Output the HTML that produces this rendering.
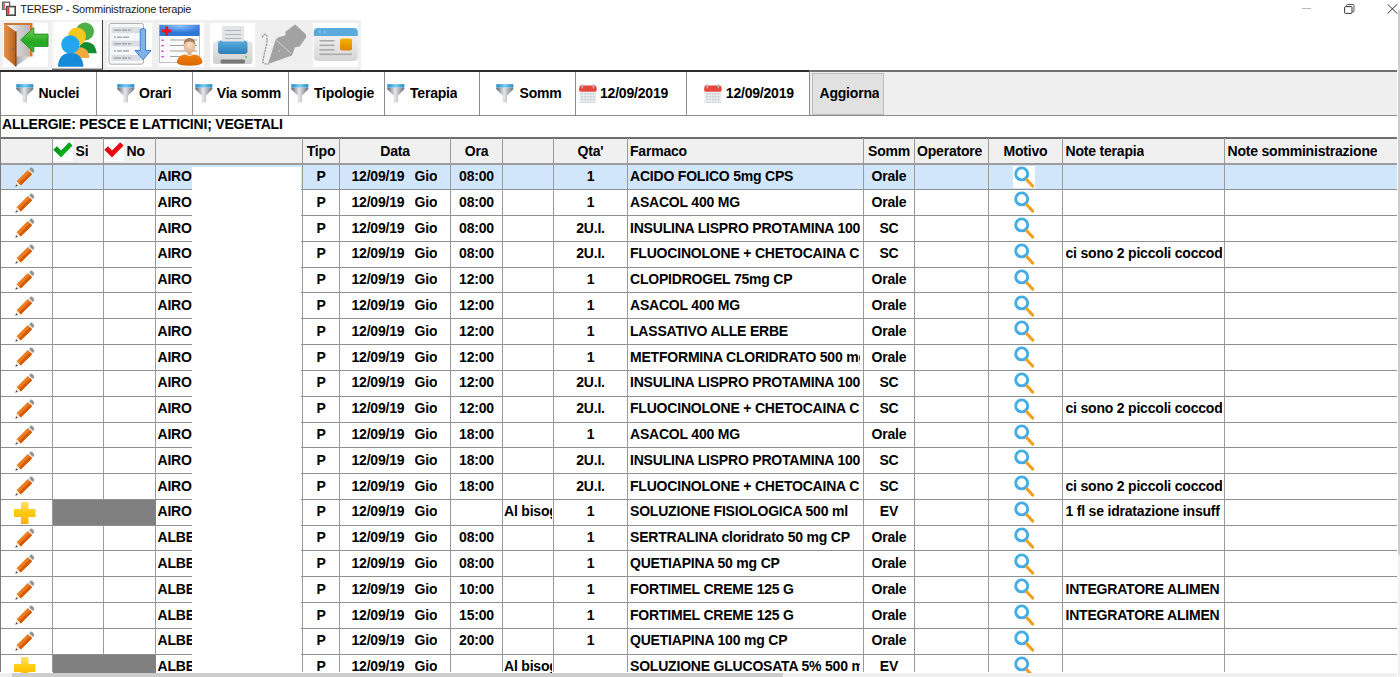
<!DOCTYPE html><html><head><meta charset="utf-8"><style>
html,body{margin:0;padding:0;width:1400px;height:677px;overflow:hidden;background:#fff;position:relative;font-family:'Liberation Sans',sans-serif;color:#000}
.t{position:absolute;white-space:nowrap;line-height:16px;height:17px;overflow:hidden;letter-spacing:-0.2px}
svg{display:block}
</style></head><body>
<svg style="position:absolute;left:0px;top:0px" width="18" height="18" viewBox="0 0 18 18"><rect x="2.6" y="2.2" width="7" height="7" fill="#fff" stroke="#666" stroke-width="1.4"/><rect x="3.3" y="3" width="1.6" height="5.5" fill="#e84848"/><rect x="6.8" y="6.6" width="8.4" height="8.6" fill="#fff" stroke="#4a4a4a" stroke-width="1.6"/><rect x="7.6" y="7.4" width="1.8" height="7" fill="#e83030"/></svg>
<div class="t" style="left:20.2px;top:0.6px;font-size:11px;font-weight:normal;color:#1a1a1a;letter-spacing:-0.2px">TERESP - Somministrazione terapie</div>
<div style="position:absolute;left:1302px;top:8px;width:9px;height:1px;background:#b8b8b8"></div>
<svg style="position:absolute;left:1343px;top:3px" width="14" height="12" viewBox="0 0 14 12"><path d="M3.5 3 L3.5 2.5 Q3.5 1.5 4.5 1.5 L10 1.5 Q11 1.5 11 2.5 L11 8 Q11 9 10 9 L9.5 9" fill="none" stroke="#555" stroke-width="1"/><rect x="1.6" y="3.6" width="7.4" height="6.8" fill="#fff" stroke="#333" stroke-width="1" rx="0.8"/></svg>
<svg style="position:absolute;left:1387px;top:4px" width="11" height="10" viewBox="0 0 11 10"><path d="M0.5 0.2 L10.3 9.6 M10.3 0.2 L0.5 9.6" stroke="#333" stroke-width="1"/></svg>
<div style="position:absolute;left:1397.5px;top:10px;width:2.5px;height:545px;background:#cdcdcd"></div>
<div style="position:absolute;left:1397.5px;top:555px;width:2.5px;height:122px;background:#f0f0f0"></div>
<div style="position:absolute;left:0px;top:20px;width:361px;height:50px;background:#efefef"></div>
<div style="position:absolute;left:3px;top:23px;width:45px;height:44px;background:#fff"></div>
<div style="position:absolute;left:107px;top:23px;width:45px;height:44px;background:#fff"></div>
<div style="position:absolute;left:158.5px;top:23px;width:45px;height:44px;background:#fff"></div>
<div style="position:absolute;left:209.8px;top:23px;width:45px;height:44px;background:#fff"></div>
<div style="position:absolute;left:313px;top:23px;width:45px;height:44px;background:#fff"></div>
<div style="position:absolute;left:52px;top:21px;width:50px;height:49px;background:#f7f7f7"></div>
<div style="position:absolute;left:55px;top:23px;width:45px;height:44px;background:#fff"></div>
<div style="position:absolute;left:102px;top:20px;width:1px;height:50px;background:#3c3c3c"></div>
<div style="position:absolute;left:52px;top:68px;width:50px;height:1px;background:#bdbdbd"></div>
<div style="position:absolute;left:52px;top:69px;width:51px;height:1px;background:#6a6a6a"></div>
<svg style="position:absolute;left:3px;top:22px" width="46" height="46" viewBox="0 0 46 46">
<defs><linearGradient id="dg" x1="0" y1="0" x2="1" y2="0"><stop offset="0" stop-color="#fafafa"/><stop offset="0.5" stop-color="#d0d0d0"/><stop offset="1" stop-color="#b8b8b8"/></linearGradient>
<linearGradient id="wd" x1="0" y1="0" x2="1" y2="0"><stop offset="0" stop-color="#e39148"/><stop offset="1" stop-color="#b9621e"/></linearGradient>
<linearGradient id="fl" x1="0" y1="0" x2="1" y2="0"><stop offset="0" stop-color="#a0a0a0"/><stop offset="1" stop-color="#f4f4f4"/></linearGradient>
<linearGradient id="ag" x1="0" y1="0" x2="0" y2="1"><stop offset="0" stop-color="#74d254"/><stop offset="0.6" stop-color="#22a822"/><stop offset="1" stop-color="#3bb53b"/></linearGradient></defs>
<rect x="1" y="1" width="28.5" height="33.5" fill="#cf7a32"/>
<rect x="3.5" y="3" width="23.5" height="31.5" fill="url(#dg)"/>
<path d="M12.5 34.5 L28 34.5 L12.5 44 Z" fill="url(#fl)"/>
<path d="M1 1 L12.5 9.5 L12.5 44.5 L1 34.5 Z" fill="url(#wd)"/>
<rect x="12" y="9.5" width="1.6" height="35" fill="#8a4814"/>
<circle cx="10" cy="27" r="0.9" fill="#666"/><rect x="1.5" y="10" width="1.3" height="2" fill="#999"/><rect x="1.5" y="28" width="1.3" height="2" fill="#999"/>
<path d="M17.7 17.9 L30.8 5.6 L30.8 12.1 L45 12.1 L45 24.4 L30.8 24.4 L30.8 30.2 Z" fill="url(#ag)" stroke="#1c8c1c" stroke-width="0.9" stroke-linejoin="round"/>
</svg>
<svg style="position:absolute;left:55px;top:22px" width="46" height="46" viewBox="0 0 46 46">
<path d="M24 25 Q27 20 31 20 Q40.5 20 41.8 31.3 L28 31.3 Z" fill="#128a2e"/><circle cx="30" cy="9.4" r="9" fill="#4cb048"/>
<path d="M17 36 Q18 26 24 25 Q33.5 25 34.6 36 Z" fill="#f2aa3c"/><circle cx="21.9" cy="14.4" r="9" fill="#f8c81e"/>
<circle cx="15.4" cy="22.5" r="9.2" fill="#22a6ee"/><path d="M3 44.8 Q3.5 31 15.5 31 Q27.8 31 28.4 44.8 Z" fill="#168ad8"/>
</svg>
<svg style="position:absolute;left:107px;top:23px" width="45" height="44" viewBox="0 0 45 44">
<rect x="2" y="0.4" width="34.5" height="40.8" rx="2" fill="#f6f7f8" stroke="#a9adb2" stroke-width="1"/>
<g fill="#d9dee3"><rect x="4.5" y="4" width="29" height="6.2"/><rect x="4.5" y="17.7" width="29" height="5.8"/><rect x="4.5" y="31.9" width="29" height="5.9"/></g>
<g fill="#9aa0a6"><rect x="7" y="6.5" width="7" height="1.3"/><rect x="15" y="6.5" width="5" height="1.3"/><rect x="21" y="6.5" width="3" height="1.3"/>
<rect x="7" y="13.6" width="2" height="1.3"/><rect x="10" y="13.6" width="5" height="1.3"/><rect x="16" y="13.6" width="6" height="1.3"/>
<rect x="7" y="20.2" width="7" height="1.3"/><rect x="15" y="20.2" width="5" height="1.3"/><rect x="21" y="20.2" width="3" height="1.3"/>
<rect x="7" y="27.3" width="2" height="1.3"/><rect x="10" y="27.3" width="5" height="1.3"/><rect x="16" y="27.3" width="6" height="1.3"/>
<rect x="7" y="34.4" width="7" height="1.3"/><rect x="15" y="34.4" width="5" height="1.3"/><rect x="21" y="34.4" width="3" height="1.3"/></g>
<path d="M33.3 6.5 Q36 4.3 38.6 6.5 L38.6 27.5 L44 27.5 L36 36.8 L28 27.5 L33.3 27.5 Z" fill="#80b2ea" stroke="#3f7fcc" stroke-width="1" stroke-linejoin="round"/>
</svg>
<svg style="position:absolute;left:158px;top:23px" width="46" height="44" viewBox="0 0 46 44">
<defs><radialGradient id="hg" cx="0.5" cy="0.1" r="0.6"><stop offset="0" stop-color="#8cc0ff"/><stop offset="1" stop-color="#2f78d6"/></radialGradient>
<radialGradient id="fg2" cx="0.5" cy="0.4" r="0.6"><stop offset="0" stop-color="#fbe3cc"/><stop offset="1" stop-color="#dcae88"/></radialGradient>
<linearGradient id="bg2" x1="0" y1="0" x2="0" y2="1"><stop offset="0" stop-color="#f08010"/><stop offset="1" stop-color="#d86800"/></linearGradient></defs>
<rect x="1.5" y="2" width="40" height="37.5" fill="#fafafa" stroke="#c4c4c4" stroke-width="1"/>
<rect x="1.5" y="2" width="40" height="11" fill="url(#hg)"/>
<path d="M7.1 3.5 h3 v3 h3 v3 h-3 v3 h-3 v-3 h-3 v-3 h3 z" fill="#f0101a"/>
<g fill="#d830d8"><rect x="3.5" y="16.5" width="2.2" height="1.4"/><rect x="3.5" y="22" width="2.2" height="1.4"/><rect x="3.5" y="27.5" width="2.2" height="1.4"/><rect x="3.5" y="33" width="2.2" height="1.4"/></g>
<g fill="#a0a0a0"><rect x="12" y="16.5" width="27" height="1"/><rect x="12" y="22" width="27" height="1"/><rect x="12" y="27.5" width="27" height="1"/><rect x="12" y="33" width="27" height="1"/></g>
<rect x="29.5" y="27" width="4" height="5" fill="#d8b090"/>
<ellipse cx="31.5" cy="23" rx="5.8" ry="7" fill="url(#fg2)"/>
<path d="M25.6 22.5 Q25.3 15 31.5 15 Q37.7 15 37.4 22.5 Q36.2 18.5 31.5 18.5 Q26.8 18.5 25.6 22.5Z" fill="#a08060"/>
<path d="M18.8 39 Q19.5 32.5 27 31.5 L31.5 33 L36 31.5 Q44 32.5 44.5 39 Q44 42.8 31.5 42.8 Q19 42.8 18.8 39 Z" fill="url(#bg2)"/>
</svg>
<svg style="position:absolute;left:210px;top:23px" width="45" height="44" viewBox="0 0 45 44">
<defs><linearGradient id="pb" x1="0" y1="0" x2="0" y2="1"><stop offset="0" stop-color="#5aaee0"/><stop offset="1" stop-color="#2a7fb8"/></linearGradient>
<linearGradient id="pgray" x1="0" y1="0" x2="0" y2="1"><stop offset="0" stop-color="#e8e8e8"/><stop offset="1" stop-color="#cfcfcf"/></linearGradient></defs>
<rect x="3" y="18.5" width="39.5" height="22.5" rx="3" fill="url(#pgray)"/>
<rect x="8" y="17.5" width="29.5" height="13.5" rx="3" fill="url(#pb)"/>
<rect x="12" y="3" width="22" height="15.5" fill="#e4e4e4"/>
<g fill="#a8b4bf"><rect x="15" y="7" width="16" height="1"/><rect x="15" y="11" width="16" height="1"/><rect x="15" y="15" width="16" height="1"/></g>
<rect x="10.5" y="36.5" width="24.5" height="4" rx="1.5" fill="#777"/>
<circle cx="36" cy="34" r="0.9" fill="#3c3"/>
</svg>
<svg style="position:absolute;left:255px;top:18px" width="56" height="52" viewBox="0 0 56 52">
<path d="M13 46 L20.7 21.5 L23 19.6 L30.7 17.3 L30.3 13.8 L40.3 6.5 L51 16.5 L51 19.6 L44.5 28.4 L40 29.2 L36.9 37.6 Z" fill="#a2a2a2"/>
<path d="M21.5 22.5 L36 35.5" stroke="#dadada" stroke-width="0.9"/>
<circle cx="24.2" cy="33" r="0.8" fill="#d8d8d8"/>
<path d="M7.3 19.6 Q8.5 15.2 11.2 16.6 Q12.8 18.5 11.5 27 Q8.8 37 7.8 44 Q8.5 46.5 13.5 46" fill="none" stroke="#9c9c9c" stroke-width="1.4" stroke-dasharray="2.2 0.8"/>
</svg>
<svg style="position:absolute;left:313px;top:23px" width="46" height="44" viewBox="0 0 46 44">
<defs><linearGradient id="cg" x1="0" y1="0" x2="0" y2="1"><stop offset="0" stop-color="#f8f8f8"/><stop offset="1" stop-color="#d6d6d6"/></linearGradient>
<linearGradient id="og" x1="0" y1="0" x2="0" y2="1"><stop offset="0" stop-color="#f5b300"/><stop offset="1" stop-color="#e08400"/></linearGradient></defs>
<rect x="0.8" y="5" width="44" height="33" rx="4" fill="url(#cg)"/>
<path d="M0.8 9 Q0.8 5 4.8 5 L40.8 5 Q44.8 5 44.8 9 L44.8 13 L0.8 13 Z" fill="#5aabdb"/>
<g fill="#9fcbe8"><path d="M5.5 9 L7.5 7.5 L7.5 10.5Z"/><path d="M11 7.5 L13 9 L11 10.5Z"/></g>
<g fill="#aaa"><rect x="6.5" y="17" width="15" height="1.6"/><rect x="6.5" y="21.5" width="15" height="1.6"/><rect x="6.5" y="26" width="15" height="1.6"/><rect x="6.5" y="30.5" width="32.5" height="1.6"/></g>
<rect x="27" y="15.5" width="12" height="12" rx="2" fill="url(#og)"/>
</svg>
<div style="position:absolute;left:0px;top:70px;width:809px;height:2px;background:#2e2e2e"></div>
<div style="position:absolute;left:809px;top:70px;width:588px;height:2px;background:#707070"></div>
<div style="position:absolute;left:0px;top:72px;width:1397px;height:43px;background:#efefef"></div>
<div style="position:absolute;left:0px;top:72px;width:810px;height:43px;background:#fff"></div>
<div style="position:absolute;left:0px;top:114.5px;width:1397px;height:1px;background:#8c8c8c"></div>
<div style="position:absolute;left:0px;top:72px;width:1px;height:43px;background:#8c8c8c"></div>
<div style="position:absolute;left:96px;top:72px;width:1px;height:43px;background:#8c8c8c"></div>
<div style="position:absolute;left:192px;top:72px;width:1px;height:43px;background:#8c8c8c"></div>
<div style="position:absolute;left:288px;top:72px;width:1px;height:43px;background:#8c8c8c"></div>
<div style="position:absolute;left:384px;top:72px;width:1px;height:43px;background:#8c8c8c"></div>
<div style="position:absolute;left:479px;top:72px;width:1px;height:43px;background:#8c8c8c"></div>
<div style="position:absolute;left:575px;top:72px;width:1px;height:43px;background:#8c8c8c"></div>
<div style="position:absolute;left:686px;top:72px;width:1px;height:43px;background:#8c8c8c"></div>
<div style="position:absolute;left:809px;top:72px;width:1px;height:43px;background:#8c8c8c"></div>
<div style="position:absolute;left:812px;top:73px;width:72px;height:41.5px;box-sizing:border-box;background:#e1e1e1;border:1px solid #bcbcbc"></div>
<div class="t" style="left:819.5px;top:84.8px;font-size:14px;font-weight:bold;">Aggiorna</div>
<div style="position:absolute;left:16.1px;top:84px"><svg width="18" height="19" viewBox="0 0 18 19"><defs><linearGradient id="fg" x1="0" y1="0" x2="1" y2="0"><stop offset="0" stop-color="#5f6468"/><stop offset="0.45" stop-color="#e6e8ea"/><stop offset="1" stop-color="#6f7478"/></linearGradient><linearGradient id="fb" x1="0" y1="0" x2="1" y2="0"><stop offset="0" stop-color="#2b88c8"/><stop offset="0.5" stop-color="#78cdf0"/><stop offset="1" stop-color="#2b88c8"/></linearGradient></defs><path d="M0.3 3.4 L17.3 3.4 L17.3 5.2 L11 11.8 L11 17.6 Q10.6 18.6 9.2 18.6 L6.8 18.6 L6.8 11.8 L0.3 5.2 Z" fill="url(#fg)"/><rect x="0.3" y="0.1" width="17" height="3.4" fill="url(#fb)"/></svg></div>
<div class="t" style="left:38.4px;top:84.8px;font-size:14px;font-weight:bold;">Nuclei</div>
<div style="position:absolute;left:116.6px;top:84px"><svg width="18" height="19" viewBox="0 0 18 19"><defs><linearGradient id="fg" x1="0" y1="0" x2="1" y2="0"><stop offset="0" stop-color="#5f6468"/><stop offset="0.45" stop-color="#e6e8ea"/><stop offset="1" stop-color="#6f7478"/></linearGradient><linearGradient id="fb" x1="0" y1="0" x2="1" y2="0"><stop offset="0" stop-color="#2b88c8"/><stop offset="0.5" stop-color="#78cdf0"/><stop offset="1" stop-color="#2b88c8"/></linearGradient></defs><path d="M0.3 3.4 L17.3 3.4 L17.3 5.2 L11 11.8 L11 17.6 Q10.6 18.6 9.2 18.6 L6.8 18.6 L6.8 11.8 L0.3 5.2 Z" fill="url(#fg)"/><rect x="0.3" y="0.1" width="17" height="3.4" fill="url(#fb)"/></svg></div>
<div class="t" style="left:139px;top:84.8px;font-size:14px;font-weight:bold;">Orari</div>
<div style="position:absolute;left:194.9px;top:84px"><svg width="18" height="19" viewBox="0 0 18 19"><defs><linearGradient id="fg" x1="0" y1="0" x2="1" y2="0"><stop offset="0" stop-color="#5f6468"/><stop offset="0.45" stop-color="#e6e8ea"/><stop offset="1" stop-color="#6f7478"/></linearGradient><linearGradient id="fb" x1="0" y1="0" x2="1" y2="0"><stop offset="0" stop-color="#2b88c8"/><stop offset="0.5" stop-color="#78cdf0"/><stop offset="1" stop-color="#2b88c8"/></linearGradient></defs><path d="M0.3 3.4 L17.3 3.4 L17.3 5.2 L11 11.8 L11 17.6 Q10.6 18.6 9.2 18.6 L6.8 18.6 L6.8 11.8 L0.3 5.2 Z" fill="url(#fg)"/><rect x="0.3" y="0.1" width="17" height="3.4" fill="url(#fb)"/></svg></div>
<div class="t" style="left:216.8px;top:84.8px;font-size:14px;font-weight:bold;">Via somm</div>
<div style="position:absolute;left:290.6px;top:84px"><svg width="18" height="19" viewBox="0 0 18 19"><defs><linearGradient id="fg" x1="0" y1="0" x2="1" y2="0"><stop offset="0" stop-color="#5f6468"/><stop offset="0.45" stop-color="#e6e8ea"/><stop offset="1" stop-color="#6f7478"/></linearGradient><linearGradient id="fb" x1="0" y1="0" x2="1" y2="0"><stop offset="0" stop-color="#2b88c8"/><stop offset="0.5" stop-color="#78cdf0"/><stop offset="1" stop-color="#2b88c8"/></linearGradient></defs><path d="M0.3 3.4 L17.3 3.4 L17.3 5.2 L11 11.8 L11 17.6 Q10.6 18.6 9.2 18.6 L6.8 18.6 L6.8 11.8 L0.3 5.2 Z" fill="url(#fg)"/><rect x="0.3" y="0.1" width="17" height="3.4" fill="url(#fb)"/></svg></div>
<div class="t" style="left:314px;top:84.8px;font-size:14px;font-weight:bold;">Tipologie</div>
<div style="position:absolute;left:386.6px;top:84px"><svg width="18" height="19" viewBox="0 0 18 19"><defs><linearGradient id="fg" x1="0" y1="0" x2="1" y2="0"><stop offset="0" stop-color="#5f6468"/><stop offset="0.45" stop-color="#e6e8ea"/><stop offset="1" stop-color="#6f7478"/></linearGradient><linearGradient id="fb" x1="0" y1="0" x2="1" y2="0"><stop offset="0" stop-color="#2b88c8"/><stop offset="0.5" stop-color="#78cdf0"/><stop offset="1" stop-color="#2b88c8"/></linearGradient></defs><path d="M0.3 3.4 L17.3 3.4 L17.3 5.2 L11 11.8 L11 17.6 Q10.6 18.6 9.2 18.6 L6.8 18.6 L6.8 11.8 L0.3 5.2 Z" fill="url(#fg)"/><rect x="0.3" y="0.1" width="17" height="3.4" fill="url(#fb)"/></svg></div>
<div class="t" style="left:410px;top:84.8px;font-size:14px;font-weight:bold;">Terapia</div>
<div style="position:absolute;left:496.3px;top:84px"><svg width="18" height="19" viewBox="0 0 18 19"><defs><linearGradient id="fg" x1="0" y1="0" x2="1" y2="0"><stop offset="0" stop-color="#5f6468"/><stop offset="0.45" stop-color="#e6e8ea"/><stop offset="1" stop-color="#6f7478"/></linearGradient><linearGradient id="fb" x1="0" y1="0" x2="1" y2="0"><stop offset="0" stop-color="#2b88c8"/><stop offset="0.5" stop-color="#78cdf0"/><stop offset="1" stop-color="#2b88c8"/></linearGradient></defs><path d="M0.3 3.4 L17.3 3.4 L17.3 5.2 L11 11.8 L11 17.6 Q10.6 18.6 9.2 18.6 L6.8 18.6 L6.8 11.8 L0.3 5.2 Z" fill="url(#fg)"/><rect x="0.3" y="0.1" width="17" height="3.4" fill="url(#fb)"/></svg></div>
<div class="t" style="left:519.5px;top:84.8px;font-size:14px;font-weight:bold;">Somm</div>
<div style="position:absolute;left:578.5px;top:82.5px"><svg width="18" height="21" viewBox="0 0 18 21"><rect x="0.4" y="2.4" width="17" height="17.5" rx="1.6" fill="#e9ecee"/><rect x="0.4" y="19" width="17" height="0.9" fill="#d6d9dc"/><rect x="0.4" y="2.4" width="17" height="6" rx="1.6" fill="#e5483a"/><rect x="0.4" y="5" width="17" height="3.4" fill="#e5483a"/><rect x="2.6" y="1" width="1.5" height="4.5" rx="0.7" fill="#b8bcc0"/><rect x="13.6" y="1" width="1.5" height="4.5" rx="0.7" fill="#b8bcc0"/><g fill="#c4c8cc"><rect x="2.2" y="10.4" width="1.7" height="1.3"/><rect x="5.1000000000000005" y="10.4" width="1.7" height="1.3"/><rect x="8.0" y="10.4" width="1.7" height="1.3"/><rect x="10.799999999999999" y="10.4" width="1.7" height="1.3"/><rect x="13.7" y="10.4" width="1.7" height="1.3"/><rect x="2.2" y="13.1" width="1.7" height="1.3"/><rect x="5.1000000000000005" y="13.1" width="1.7" height="1.3"/><rect x="8.0" y="13.1" width="1.7" height="1.3"/><rect x="10.799999999999999" y="13.1" width="1.7" height="1.3"/><rect x="13.7" y="13.1" width="1.7" height="1.3"/><rect x="2.2" y="15.9" width="1.7" height="1.3"/><rect x="5.1000000000000005" y="15.9" width="1.7" height="1.3"/><rect x="8.0" y="15.9" width="1.7" height="1.3"/><rect x="10.799999999999999" y="15.9" width="1.7" height="1.3"/><rect x="13.7" y="15.9" width="1.7" height="1.3"/></g></svg></div>
<div class="t" style="left:600px;top:84.8px;font-size:14px;font-weight:bold;">12/09/2019</div>
<div style="position:absolute;left:703.6px;top:82.5px"><svg width="18" height="21" viewBox="0 0 18 21"><rect x="0.4" y="2.4" width="17" height="17.5" rx="1.6" fill="#e9ecee"/><rect x="0.4" y="19" width="17" height="0.9" fill="#d6d9dc"/><rect x="0.4" y="2.4" width="17" height="6" rx="1.6" fill="#e5483a"/><rect x="0.4" y="5" width="17" height="3.4" fill="#e5483a"/><rect x="2.6" y="1" width="1.5" height="4.5" rx="0.7" fill="#b8bcc0"/><rect x="13.6" y="1" width="1.5" height="4.5" rx="0.7" fill="#b8bcc0"/><g fill="#c4c8cc"><rect x="2.2" y="10.4" width="1.7" height="1.3"/><rect x="5.1000000000000005" y="10.4" width="1.7" height="1.3"/><rect x="8.0" y="10.4" width="1.7" height="1.3"/><rect x="10.799999999999999" y="10.4" width="1.7" height="1.3"/><rect x="13.7" y="10.4" width="1.7" height="1.3"/><rect x="2.2" y="13.1" width="1.7" height="1.3"/><rect x="5.1000000000000005" y="13.1" width="1.7" height="1.3"/><rect x="8.0" y="13.1" width="1.7" height="1.3"/><rect x="10.799999999999999" y="13.1" width="1.7" height="1.3"/><rect x="13.7" y="13.1" width="1.7" height="1.3"/><rect x="2.2" y="15.9" width="1.7" height="1.3"/><rect x="5.1000000000000005" y="15.9" width="1.7" height="1.3"/><rect x="8.0" y="15.9" width="1.7" height="1.3"/><rect x="10.799999999999999" y="15.9" width="1.7" height="1.3"/><rect x="13.7" y="15.9" width="1.7" height="1.3"/></g></svg></div>
<div class="t" style="left:725.8px;top:84.8px;font-size:14px;font-weight:bold;">12/09/2019</div>
<div class="t" style="left:2px;top:115.8px;font-size:14px;font-weight:bold;">ALLERGIE: PESCE E LATTICINI; VEGETALI</div>
<div style="position:absolute;left:1px;top:137.7px;width:1396px;height:26.30000000000001px;background:#f0f0f0"></div>
<div style="position:absolute;left:1px;top:164px;width:1396px;height:25.8px;background:#d2e6fb"></div>
<div style="position:absolute;left:52.5px;top:499.90000000000003px;width:103px;height:25.3px;background:#808080"></div>
<div style="position:absolute;left:52.5px;top:654.7px;width:103px;height:25.3px;background:#808080"></div>
<div style="position:absolute;left:53px;top:140px"><svg width="20" height="21" viewBox="0 0 20 21"><defs><linearGradient id="cgg" x1="0" y1="0" x2="1" y2="1"><stop offset="0" stop-color="#007a10"/><stop offset="1" stop-color="#10d020"/></linearGradient></defs><rect width="20" height="21" fill="#fff"/><path d="M0.3 9.8 L4 6.2 L8 10.4 L16.2 2.2 L19.6 5.6 L8 17.6 Z" fill="url(#cgg)"/></svg></div>
<div style="position:absolute;left:104px;top:140px"><svg width="20" height="21" viewBox="0 0 20 21"><defs><linearGradient id="crg" x1="0" y1="0" x2="1" y2="1"><stop offset="0" stop-color="#d00010"/><stop offset="1" stop-color="#ff1010"/></linearGradient></defs><rect width="20" height="21" fill="#fff"/><path d="M0.3 9.8 L4 6.2 L8 10.4 L16.2 2.2 L19.6 5.6 L8 17.6 Z" fill="url(#crg)"/></svg></div>
<div class="t" style="left:75.5px;top:142.5px;font-size:14px;font-weight:bold;">Si</div>
<div class="t" style="left:126.5px;top:142.5px;font-size:14px;font-weight:bold;">No</div>
<div class="t" style="left:303px;top:142.5px;width:36px;text-align:center;font-size:14px;font-weight:bold;">Tipo</div>
<div class="t" style="left:340px;top:142.5px;width:110px;text-align:center;font-size:14px;font-weight:bold;">Data</div>
<div class="t" style="left:451px;top:142.5px;width:51px;text-align:center;font-size:14px;font-weight:bold;">Ora</div>
<div class="t" style="left:554px;top:142.5px;width:73px;text-align:center;font-size:14px;font-weight:bold;">Qta'</div>
<div class="t" style="left:630px;top:142.5px;font-size:14px;font-weight:bold;">Farmaco</div>
<div class="t" style="left:864px;top:142.5px;width:50px;text-align:center;font-size:14px;font-weight:bold;">Somm</div>
<div class="t" style="left:917px;top:142.5px;font-size:14px;font-weight:bold;">Operatore</div>
<div class="t" style="left:989px;top:142.5px;width:73px;text-align:center;font-size:14px;font-weight:bold;">Motivo</div>
<div class="t" style="left:1065.5px;top:142.5px;font-size:14px;font-weight:bold;">Note terapia</div>
<div class="t" style="left:1227.5px;top:142.5px;font-size:14px;font-weight:bold;">Note somministrazione</div>
<div style="position:absolute;left:9.6px;top:161.8px"><svg width="30" height="30" viewBox="0 0 30 30"><g transform="rotate(45 15 15)"><rect x="12.2" y="3.4" width="5.6" height="4" rx="2.6" fill="#8c9797"/><rect x="12" y="6.6" width="6" height="1.4" fill="#eef0f0"/><rect x="12" y="8" width="6" height="16" fill="#ec7c20"/><rect x="15.3" y="8" width="2.7" height="16" fill="#d65a06"/><path d="M12 24 L18 24 L15 28.6 Z" fill="#f4e8d6"/><path d="M13.9 26.3 L16.1 26.3 L15 28.7 Z" fill="#33405a"/></g></svg></div>
<div class="t" style="left:157.5px;top:168.0px;font-size:14px;font-weight:bold;">AIRO</div>
<div class="t" style="left:303px;top:168.0px;width:36px;text-align:center;font-size:14px;font-weight:bold;">P</div>
<div class="t" style="left:351.5px;top:168.0px;width:97px;text-align:left;font-size:14px;font-weight:bold;">12/09/19</div>
<div class="t" style="left:414.5px;top:168.0px;font-size:14px;font-weight:bold;">Gio</div>
<div class="t" style="left:451px;top:168.0px;width:51px;text-align:center;font-size:14px;font-weight:bold;">08:00</div>
<div class="t" style="left:554px;top:168.0px;width:73px;text-align:center;font-size:14px;font-weight:bold;">1</div>
<div class="t" style="left:630px;top:168.0px;width:230px;text-align:left;font-size:14px;font-weight:bold;">ACIDO FOLICO 5mg CPS</div>
<div class="t" style="left:864px;top:168.0px;width:50px;text-align:center;font-size:14px;font-weight:bold;">Orale</div>
<div style="position:absolute;left:1013px;top:166.0px;width:22px;height:22px;background:#fff"></div>
<div style="position:absolute;left:1013px;top:165.5px"><svg width="22" height="22" viewBox="0 0 22 22"><circle cx="8.7" cy="7.9" r="6" fill="none" stroke="#45ace6" stroke-width="2.9"/><line x1="14" y1="14" x2="19.6" y2="20" stroke="#f0a020" stroke-width="3.2" stroke-linecap="round"/></svg></div>
<div style="position:absolute;left:9.6px;top:187.60000000000002px"><svg width="30" height="30" viewBox="0 0 30 30"><g transform="rotate(45 15 15)"><rect x="12.2" y="3.4" width="5.6" height="4" rx="2.6" fill="#8c9797"/><rect x="12" y="6.6" width="6" height="1.4" fill="#eef0f0"/><rect x="12" y="8" width="6" height="16" fill="#ec7c20"/><rect x="15.3" y="8" width="2.7" height="16" fill="#d65a06"/><path d="M12 24 L18 24 L15 28.6 Z" fill="#f4e8d6"/><path d="M13.9 26.3 L16.1 26.3 L15 28.7 Z" fill="#33405a"/></g></svg></div>
<div class="t" style="left:157.5px;top:193.8px;font-size:14px;font-weight:bold;">AIRO</div>
<div class="t" style="left:303px;top:193.8px;width:36px;text-align:center;font-size:14px;font-weight:bold;">P</div>
<div class="t" style="left:351.5px;top:193.8px;width:97px;text-align:left;font-size:14px;font-weight:bold;">12/09/19</div>
<div class="t" style="left:414.5px;top:193.8px;font-size:14px;font-weight:bold;">Gio</div>
<div class="t" style="left:451px;top:193.8px;width:51px;text-align:center;font-size:14px;font-weight:bold;">08:00</div>
<div class="t" style="left:554px;top:193.8px;width:73px;text-align:center;font-size:14px;font-weight:bold;">1</div>
<div class="t" style="left:630px;top:193.8px;width:230px;text-align:left;font-size:14px;font-weight:bold;">ASACOL 400 MG</div>
<div class="t" style="left:864px;top:193.8px;width:50px;text-align:center;font-size:14px;font-weight:bold;">Orale</div>
<div style="position:absolute;left:1013px;top:191.3px"><svg width="22" height="22" viewBox="0 0 22 22"><circle cx="8.7" cy="7.9" r="6" fill="none" stroke="#45ace6" stroke-width="2.9"/><line x1="14" y1="14" x2="19.6" y2="20" stroke="#f0a020" stroke-width="3.2" stroke-linecap="round"/></svg></div>
<div style="position:absolute;left:9.6px;top:213.4px"><svg width="30" height="30" viewBox="0 0 30 30"><g transform="rotate(45 15 15)"><rect x="12.2" y="3.4" width="5.6" height="4" rx="2.6" fill="#8c9797"/><rect x="12" y="6.6" width="6" height="1.4" fill="#eef0f0"/><rect x="12" y="8" width="6" height="16" fill="#ec7c20"/><rect x="15.3" y="8" width="2.7" height="16" fill="#d65a06"/><path d="M12 24 L18 24 L15 28.6 Z" fill="#f4e8d6"/><path d="M13.9 26.3 L16.1 26.3 L15 28.7 Z" fill="#33405a"/></g></svg></div>
<div class="t" style="left:157.5px;top:219.6px;font-size:14px;font-weight:bold;">AIRO</div>
<div class="t" style="left:303px;top:219.6px;width:36px;text-align:center;font-size:14px;font-weight:bold;">P</div>
<div class="t" style="left:351.5px;top:219.6px;width:97px;text-align:left;font-size:14px;font-weight:bold;">12/09/19</div>
<div class="t" style="left:414.5px;top:219.6px;font-size:14px;font-weight:bold;">Gio</div>
<div class="t" style="left:451px;top:219.6px;width:51px;text-align:center;font-size:14px;font-weight:bold;">08:00</div>
<div class="t" style="left:554px;top:219.6px;width:73px;text-align:center;font-size:14px;font-weight:bold;">2U.I.</div>
<div class="t" style="left:630px;top:219.6px;width:230px;text-align:left;font-size:14px;font-weight:bold;">INSULINA LISPRO PROTAMINA 100</div>
<div class="t" style="left:864px;top:219.6px;width:50px;text-align:center;font-size:14px;font-weight:bold;">SC</div>
<div style="position:absolute;left:1013px;top:217.1px"><svg width="22" height="22" viewBox="0 0 22 22"><circle cx="8.7" cy="7.9" r="6" fill="none" stroke="#45ace6" stroke-width="2.9"/><line x1="14" y1="14" x2="19.6" y2="20" stroke="#f0a020" stroke-width="3.2" stroke-linecap="round"/></svg></div>
<div style="position:absolute;left:9.6px;top:239.20000000000002px"><svg width="30" height="30" viewBox="0 0 30 30"><g transform="rotate(45 15 15)"><rect x="12.2" y="3.4" width="5.6" height="4" rx="2.6" fill="#8c9797"/><rect x="12" y="6.6" width="6" height="1.4" fill="#eef0f0"/><rect x="12" y="8" width="6" height="16" fill="#ec7c20"/><rect x="15.3" y="8" width="2.7" height="16" fill="#d65a06"/><path d="M12 24 L18 24 L15 28.6 Z" fill="#f4e8d6"/><path d="M13.9 26.3 L16.1 26.3 L15 28.7 Z" fill="#33405a"/></g></svg></div>
<div class="t" style="left:157.5px;top:245.4px;font-size:14px;font-weight:bold;">AIRO</div>
<div class="t" style="left:303px;top:245.4px;width:36px;text-align:center;font-size:14px;font-weight:bold;">P</div>
<div class="t" style="left:351.5px;top:245.4px;width:97px;text-align:left;font-size:14px;font-weight:bold;">12/09/19</div>
<div class="t" style="left:414.5px;top:245.4px;font-size:14px;font-weight:bold;">Gio</div>
<div class="t" style="left:451px;top:245.4px;width:51px;text-align:center;font-size:14px;font-weight:bold;">08:00</div>
<div class="t" style="left:554px;top:245.4px;width:73px;text-align:center;font-size:14px;font-weight:bold;">2U.I.</div>
<div class="t" style="left:630px;top:245.4px;width:230px;text-align:left;font-size:14px;font-weight:bold;">FLUOCINOLONE + CHETOCAINA C</div>
<div class="t" style="left:864px;top:245.4px;width:50px;text-align:center;font-size:14px;font-weight:bold;">SC</div>
<div class="t" style="left:1065.5px;top:245.4px;width:156px;text-align:left;font-size:14px;font-weight:bold;">ci sono 2 piccoli coccodi</div>
<div style="position:absolute;left:1013px;top:242.9px"><svg width="22" height="22" viewBox="0 0 22 22"><circle cx="8.7" cy="7.9" r="6" fill="none" stroke="#45ace6" stroke-width="2.9"/><line x1="14" y1="14" x2="19.6" y2="20" stroke="#f0a020" stroke-width="3.2" stroke-linecap="round"/></svg></div>
<div style="position:absolute;left:9.6px;top:265.0px"><svg width="30" height="30" viewBox="0 0 30 30"><g transform="rotate(45 15 15)"><rect x="12.2" y="3.4" width="5.6" height="4" rx="2.6" fill="#8c9797"/><rect x="12" y="6.6" width="6" height="1.4" fill="#eef0f0"/><rect x="12" y="8" width="6" height="16" fill="#ec7c20"/><rect x="15.3" y="8" width="2.7" height="16" fill="#d65a06"/><path d="M12 24 L18 24 L15 28.6 Z" fill="#f4e8d6"/><path d="M13.9 26.3 L16.1 26.3 L15 28.7 Z" fill="#33405a"/></g></svg></div>
<div class="t" style="left:157.5px;top:271.2px;font-size:14px;font-weight:bold;">AIRO</div>
<div class="t" style="left:303px;top:271.2px;width:36px;text-align:center;font-size:14px;font-weight:bold;">P</div>
<div class="t" style="left:351.5px;top:271.2px;width:97px;text-align:left;font-size:14px;font-weight:bold;">12/09/19</div>
<div class="t" style="left:414.5px;top:271.2px;font-size:14px;font-weight:bold;">Gio</div>
<div class="t" style="left:451px;top:271.2px;width:51px;text-align:center;font-size:14px;font-weight:bold;">12:00</div>
<div class="t" style="left:554px;top:271.2px;width:73px;text-align:center;font-size:14px;font-weight:bold;">1</div>
<div class="t" style="left:630px;top:271.2px;width:230px;text-align:left;font-size:14px;font-weight:bold;">CLOPIDROGEL 75mg CP</div>
<div class="t" style="left:864px;top:271.2px;width:50px;text-align:center;font-size:14px;font-weight:bold;">Orale</div>
<div style="position:absolute;left:1013px;top:268.7px"><svg width="22" height="22" viewBox="0 0 22 22"><circle cx="8.7" cy="7.9" r="6" fill="none" stroke="#45ace6" stroke-width="2.9"/><line x1="14" y1="14" x2="19.6" y2="20" stroke="#f0a020" stroke-width="3.2" stroke-linecap="round"/></svg></div>
<div style="position:absolute;left:9.6px;top:290.8px"><svg width="30" height="30" viewBox="0 0 30 30"><g transform="rotate(45 15 15)"><rect x="12.2" y="3.4" width="5.6" height="4" rx="2.6" fill="#8c9797"/><rect x="12" y="6.6" width="6" height="1.4" fill="#eef0f0"/><rect x="12" y="8" width="6" height="16" fill="#ec7c20"/><rect x="15.3" y="8" width="2.7" height="16" fill="#d65a06"/><path d="M12 24 L18 24 L15 28.6 Z" fill="#f4e8d6"/><path d="M13.9 26.3 L16.1 26.3 L15 28.7 Z" fill="#33405a"/></g></svg></div>
<div class="t" style="left:157.5px;top:297.0px;font-size:14px;font-weight:bold;">AIRO</div>
<div class="t" style="left:303px;top:297.0px;width:36px;text-align:center;font-size:14px;font-weight:bold;">P</div>
<div class="t" style="left:351.5px;top:297.0px;width:97px;text-align:left;font-size:14px;font-weight:bold;">12/09/19</div>
<div class="t" style="left:414.5px;top:297.0px;font-size:14px;font-weight:bold;">Gio</div>
<div class="t" style="left:451px;top:297.0px;width:51px;text-align:center;font-size:14px;font-weight:bold;">12:00</div>
<div class="t" style="left:554px;top:297.0px;width:73px;text-align:center;font-size:14px;font-weight:bold;">1</div>
<div class="t" style="left:630px;top:297.0px;width:230px;text-align:left;font-size:14px;font-weight:bold;">ASACOL 400 MG</div>
<div class="t" style="left:864px;top:297.0px;width:50px;text-align:center;font-size:14px;font-weight:bold;">Orale</div>
<div style="position:absolute;left:1013px;top:294.5px"><svg width="22" height="22" viewBox="0 0 22 22"><circle cx="8.7" cy="7.9" r="6" fill="none" stroke="#45ace6" stroke-width="2.9"/><line x1="14" y1="14" x2="19.6" y2="20" stroke="#f0a020" stroke-width="3.2" stroke-linecap="round"/></svg></div>
<div style="position:absolute;left:9.6px;top:316.6px"><svg width="30" height="30" viewBox="0 0 30 30"><g transform="rotate(45 15 15)"><rect x="12.2" y="3.4" width="5.6" height="4" rx="2.6" fill="#8c9797"/><rect x="12" y="6.6" width="6" height="1.4" fill="#eef0f0"/><rect x="12" y="8" width="6" height="16" fill="#ec7c20"/><rect x="15.3" y="8" width="2.7" height="16" fill="#d65a06"/><path d="M12 24 L18 24 L15 28.6 Z" fill="#f4e8d6"/><path d="M13.9 26.3 L16.1 26.3 L15 28.7 Z" fill="#33405a"/></g></svg></div>
<div class="t" style="left:157.5px;top:322.8px;font-size:14px;font-weight:bold;">AIRO</div>
<div class="t" style="left:303px;top:322.8px;width:36px;text-align:center;font-size:14px;font-weight:bold;">P</div>
<div class="t" style="left:351.5px;top:322.8px;width:97px;text-align:left;font-size:14px;font-weight:bold;">12/09/19</div>
<div class="t" style="left:414.5px;top:322.8px;font-size:14px;font-weight:bold;">Gio</div>
<div class="t" style="left:451px;top:322.8px;width:51px;text-align:center;font-size:14px;font-weight:bold;">12:00</div>
<div class="t" style="left:554px;top:322.8px;width:73px;text-align:center;font-size:14px;font-weight:bold;">1</div>
<div class="t" style="left:630px;top:322.8px;width:230px;text-align:left;font-size:14px;font-weight:bold;">LASSATIVO ALLE ERBE</div>
<div class="t" style="left:864px;top:322.8px;width:50px;text-align:center;font-size:14px;font-weight:bold;">Orale</div>
<div style="position:absolute;left:1013px;top:320.3px"><svg width="22" height="22" viewBox="0 0 22 22"><circle cx="8.7" cy="7.9" r="6" fill="none" stroke="#45ace6" stroke-width="2.9"/><line x1="14" y1="14" x2="19.6" y2="20" stroke="#f0a020" stroke-width="3.2" stroke-linecap="round"/></svg></div>
<div style="position:absolute;left:9.6px;top:342.40000000000003px"><svg width="30" height="30" viewBox="0 0 30 30"><g transform="rotate(45 15 15)"><rect x="12.2" y="3.4" width="5.6" height="4" rx="2.6" fill="#8c9797"/><rect x="12" y="6.6" width="6" height="1.4" fill="#eef0f0"/><rect x="12" y="8" width="6" height="16" fill="#ec7c20"/><rect x="15.3" y="8" width="2.7" height="16" fill="#d65a06"/><path d="M12 24 L18 24 L15 28.6 Z" fill="#f4e8d6"/><path d="M13.9 26.3 L16.1 26.3 L15 28.7 Z" fill="#33405a"/></g></svg></div>
<div class="t" style="left:157.5px;top:348.6px;font-size:14px;font-weight:bold;">AIRO</div>
<div class="t" style="left:303px;top:348.6px;width:36px;text-align:center;font-size:14px;font-weight:bold;">P</div>
<div class="t" style="left:351.5px;top:348.6px;width:97px;text-align:left;font-size:14px;font-weight:bold;">12/09/19</div>
<div class="t" style="left:414.5px;top:348.6px;font-size:14px;font-weight:bold;">Gio</div>
<div class="t" style="left:451px;top:348.6px;width:51px;text-align:center;font-size:14px;font-weight:bold;">12:00</div>
<div class="t" style="left:554px;top:348.6px;width:73px;text-align:center;font-size:14px;font-weight:bold;">1</div>
<div class="t" style="left:630px;top:348.6px;width:230px;text-align:left;font-size:14px;font-weight:bold;">METFORMINA CLORIDRATO 500 mg</div>
<div class="t" style="left:864px;top:348.6px;width:50px;text-align:center;font-size:14px;font-weight:bold;">Orale</div>
<div style="position:absolute;left:1013px;top:346.1px"><svg width="22" height="22" viewBox="0 0 22 22"><circle cx="8.7" cy="7.9" r="6" fill="none" stroke="#45ace6" stroke-width="2.9"/><line x1="14" y1="14" x2="19.6" y2="20" stroke="#f0a020" stroke-width="3.2" stroke-linecap="round"/></svg></div>
<div style="position:absolute;left:9.6px;top:368.2px"><svg width="30" height="30" viewBox="0 0 30 30"><g transform="rotate(45 15 15)"><rect x="12.2" y="3.4" width="5.6" height="4" rx="2.6" fill="#8c9797"/><rect x="12" y="6.6" width="6" height="1.4" fill="#eef0f0"/><rect x="12" y="8" width="6" height="16" fill="#ec7c20"/><rect x="15.3" y="8" width="2.7" height="16" fill="#d65a06"/><path d="M12 24 L18 24 L15 28.6 Z" fill="#f4e8d6"/><path d="M13.9 26.3 L16.1 26.3 L15 28.7 Z" fill="#33405a"/></g></svg></div>
<div class="t" style="left:157.5px;top:374.4px;font-size:14px;font-weight:bold;">AIRO</div>
<div class="t" style="left:303px;top:374.4px;width:36px;text-align:center;font-size:14px;font-weight:bold;">P</div>
<div class="t" style="left:351.5px;top:374.4px;width:97px;text-align:left;font-size:14px;font-weight:bold;">12/09/19</div>
<div class="t" style="left:414.5px;top:374.4px;font-size:14px;font-weight:bold;">Gio</div>
<div class="t" style="left:451px;top:374.4px;width:51px;text-align:center;font-size:14px;font-weight:bold;">12:00</div>
<div class="t" style="left:554px;top:374.4px;width:73px;text-align:center;font-size:14px;font-weight:bold;">2U.I.</div>
<div class="t" style="left:630px;top:374.4px;width:230px;text-align:left;font-size:14px;font-weight:bold;">INSULINA LISPRO PROTAMINA 100</div>
<div class="t" style="left:864px;top:374.4px;width:50px;text-align:center;font-size:14px;font-weight:bold;">SC</div>
<div style="position:absolute;left:1013px;top:371.9px"><svg width="22" height="22" viewBox="0 0 22 22"><circle cx="8.7" cy="7.9" r="6" fill="none" stroke="#45ace6" stroke-width="2.9"/><line x1="14" y1="14" x2="19.6" y2="20" stroke="#f0a020" stroke-width="3.2" stroke-linecap="round"/></svg></div>
<div style="position:absolute;left:9.6px;top:394.00000000000006px"><svg width="30" height="30" viewBox="0 0 30 30"><g transform="rotate(45 15 15)"><rect x="12.2" y="3.4" width="5.6" height="4" rx="2.6" fill="#8c9797"/><rect x="12" y="6.6" width="6" height="1.4" fill="#eef0f0"/><rect x="12" y="8" width="6" height="16" fill="#ec7c20"/><rect x="15.3" y="8" width="2.7" height="16" fill="#d65a06"/><path d="M12 24 L18 24 L15 28.6 Z" fill="#f4e8d6"/><path d="M13.9 26.3 L16.1 26.3 L15 28.7 Z" fill="#33405a"/></g></svg></div>
<div class="t" style="left:157.5px;top:400.20000000000005px;font-size:14px;font-weight:bold;">AIRO</div>
<div class="t" style="left:303px;top:400.20000000000005px;width:36px;text-align:center;font-size:14px;font-weight:bold;">P</div>
<div class="t" style="left:351.5px;top:400.20000000000005px;width:97px;text-align:left;font-size:14px;font-weight:bold;">12/09/19</div>
<div class="t" style="left:414.5px;top:400.20000000000005px;font-size:14px;font-weight:bold;">Gio</div>
<div class="t" style="left:451px;top:400.20000000000005px;width:51px;text-align:center;font-size:14px;font-weight:bold;">12:00</div>
<div class="t" style="left:554px;top:400.20000000000005px;width:73px;text-align:center;font-size:14px;font-weight:bold;">2U.I.</div>
<div class="t" style="left:630px;top:400.20000000000005px;width:230px;text-align:left;font-size:14px;font-weight:bold;">FLUOCINOLONE + CHETOCAINA C</div>
<div class="t" style="left:864px;top:400.20000000000005px;width:50px;text-align:center;font-size:14px;font-weight:bold;">SC</div>
<div class="t" style="left:1065.5px;top:400.20000000000005px;width:156px;text-align:left;font-size:14px;font-weight:bold;">ci sono 2 piccoli coccodi</div>
<div style="position:absolute;left:1013px;top:397.70000000000005px"><svg width="22" height="22" viewBox="0 0 22 22"><circle cx="8.7" cy="7.9" r="6" fill="none" stroke="#45ace6" stroke-width="2.9"/><line x1="14" y1="14" x2="19.6" y2="20" stroke="#f0a020" stroke-width="3.2" stroke-linecap="round"/></svg></div>
<div style="position:absolute;left:9.6px;top:419.8px"><svg width="30" height="30" viewBox="0 0 30 30"><g transform="rotate(45 15 15)"><rect x="12.2" y="3.4" width="5.6" height="4" rx="2.6" fill="#8c9797"/><rect x="12" y="6.6" width="6" height="1.4" fill="#eef0f0"/><rect x="12" y="8" width="6" height="16" fill="#ec7c20"/><rect x="15.3" y="8" width="2.7" height="16" fill="#d65a06"/><path d="M12 24 L18 24 L15 28.6 Z" fill="#f4e8d6"/><path d="M13.9 26.3 L16.1 26.3 L15 28.7 Z" fill="#33405a"/></g></svg></div>
<div class="t" style="left:157.5px;top:426.0px;font-size:14px;font-weight:bold;">AIRO</div>
<div class="t" style="left:303px;top:426.0px;width:36px;text-align:center;font-size:14px;font-weight:bold;">P</div>
<div class="t" style="left:351.5px;top:426.0px;width:97px;text-align:left;font-size:14px;font-weight:bold;">12/09/19</div>
<div class="t" style="left:414.5px;top:426.0px;font-size:14px;font-weight:bold;">Gio</div>
<div class="t" style="left:451px;top:426.0px;width:51px;text-align:center;font-size:14px;font-weight:bold;">18:00</div>
<div class="t" style="left:554px;top:426.0px;width:73px;text-align:center;font-size:14px;font-weight:bold;">1</div>
<div class="t" style="left:630px;top:426.0px;width:230px;text-align:left;font-size:14px;font-weight:bold;">ASACOL 400 MG</div>
<div class="t" style="left:864px;top:426.0px;width:50px;text-align:center;font-size:14px;font-weight:bold;">Orale</div>
<div style="position:absolute;left:1013px;top:423.5px"><svg width="22" height="22" viewBox="0 0 22 22"><circle cx="8.7" cy="7.9" r="6" fill="none" stroke="#45ace6" stroke-width="2.9"/><line x1="14" y1="14" x2="19.6" y2="20" stroke="#f0a020" stroke-width="3.2" stroke-linecap="round"/></svg></div>
<div style="position:absolute;left:9.6px;top:445.6px"><svg width="30" height="30" viewBox="0 0 30 30"><g transform="rotate(45 15 15)"><rect x="12.2" y="3.4" width="5.6" height="4" rx="2.6" fill="#8c9797"/><rect x="12" y="6.6" width="6" height="1.4" fill="#eef0f0"/><rect x="12" y="8" width="6" height="16" fill="#ec7c20"/><rect x="15.3" y="8" width="2.7" height="16" fill="#d65a06"/><path d="M12 24 L18 24 L15 28.6 Z" fill="#f4e8d6"/><path d="M13.9 26.3 L16.1 26.3 L15 28.7 Z" fill="#33405a"/></g></svg></div>
<div class="t" style="left:157.5px;top:451.8px;font-size:14px;font-weight:bold;">AIRO</div>
<div class="t" style="left:303px;top:451.8px;width:36px;text-align:center;font-size:14px;font-weight:bold;">P</div>
<div class="t" style="left:351.5px;top:451.8px;width:97px;text-align:left;font-size:14px;font-weight:bold;">12/09/19</div>
<div class="t" style="left:414.5px;top:451.8px;font-size:14px;font-weight:bold;">Gio</div>
<div class="t" style="left:451px;top:451.8px;width:51px;text-align:center;font-size:14px;font-weight:bold;">18:00</div>
<div class="t" style="left:554px;top:451.8px;width:73px;text-align:center;font-size:14px;font-weight:bold;">2U.I.</div>
<div class="t" style="left:630px;top:451.8px;width:230px;text-align:left;font-size:14px;font-weight:bold;">INSULINA LISPRO PROTAMINA 100</div>
<div class="t" style="left:864px;top:451.8px;width:50px;text-align:center;font-size:14px;font-weight:bold;">SC</div>
<div style="position:absolute;left:1013px;top:449.3px"><svg width="22" height="22" viewBox="0 0 22 22"><circle cx="8.7" cy="7.9" r="6" fill="none" stroke="#45ace6" stroke-width="2.9"/><line x1="14" y1="14" x2="19.6" y2="20" stroke="#f0a020" stroke-width="3.2" stroke-linecap="round"/></svg></div>
<div style="position:absolute;left:9.6px;top:471.40000000000003px"><svg width="30" height="30" viewBox="0 0 30 30"><g transform="rotate(45 15 15)"><rect x="12.2" y="3.4" width="5.6" height="4" rx="2.6" fill="#8c9797"/><rect x="12" y="6.6" width="6" height="1.4" fill="#eef0f0"/><rect x="12" y="8" width="6" height="16" fill="#ec7c20"/><rect x="15.3" y="8" width="2.7" height="16" fill="#d65a06"/><path d="M12 24 L18 24 L15 28.6 Z" fill="#f4e8d6"/><path d="M13.9 26.3 L16.1 26.3 L15 28.7 Z" fill="#33405a"/></g></svg></div>
<div class="t" style="left:157.5px;top:477.6px;font-size:14px;font-weight:bold;">AIRO</div>
<div class="t" style="left:303px;top:477.6px;width:36px;text-align:center;font-size:14px;font-weight:bold;">P</div>
<div class="t" style="left:351.5px;top:477.6px;width:97px;text-align:left;font-size:14px;font-weight:bold;">12/09/19</div>
<div class="t" style="left:414.5px;top:477.6px;font-size:14px;font-weight:bold;">Gio</div>
<div class="t" style="left:451px;top:477.6px;width:51px;text-align:center;font-size:14px;font-weight:bold;">18:00</div>
<div class="t" style="left:554px;top:477.6px;width:73px;text-align:center;font-size:14px;font-weight:bold;">2U.I.</div>
<div class="t" style="left:630px;top:477.6px;width:230px;text-align:left;font-size:14px;font-weight:bold;">FLUOCINOLONE + CHETOCAINA C</div>
<div class="t" style="left:864px;top:477.6px;width:50px;text-align:center;font-size:14px;font-weight:bold;">SC</div>
<div class="t" style="left:1065.5px;top:477.6px;width:156px;text-align:left;font-size:14px;font-weight:bold;">ci sono 2 piccoli coccodi</div>
<div style="position:absolute;left:1013px;top:475.1px"><svg width="22" height="22" viewBox="0 0 22 22"><circle cx="8.7" cy="7.9" r="6" fill="none" stroke="#45ace6" stroke-width="2.9"/><line x1="14" y1="14" x2="19.6" y2="20" stroke="#f0a020" stroke-width="3.2" stroke-linecap="round"/></svg></div>
<div style="position:absolute;left:13px;top:500.90000000000003px"><svg width="24" height="24" viewBox="0 0 24 24"><defs><linearGradient id="pg" x1="0" y1="0" x2="0" y2="1"><stop offset="0" stop-color="#ffe070"/><stop offset="0.45" stop-color="#ffcc10"/><stop offset="1" stop-color="#ffb000"/></linearGradient></defs><path d="M8 1h7.5v7h7v8h-7v7H8v-7H1V8h7z" fill="url(#pg)"/></svg></div>
<div class="t" style="left:157.5px;top:503.40000000000003px;font-size:14px;font-weight:bold;">AIRO</div>
<div class="t" style="left:303px;top:503.40000000000003px;width:36px;text-align:center;font-size:14px;font-weight:bold;">P</div>
<div class="t" style="left:351.5px;top:503.40000000000003px;width:97px;text-align:left;font-size:14px;font-weight:bold;">12/09/19</div>
<div class="t" style="left:414.5px;top:503.40000000000003px;font-size:14px;font-weight:bold;">Gio</div>
<div class="t" style="left:504px;top:503.40000000000003px;width:48px;text-align:left;font-size:14px;font-weight:bold;">Al bisogno</div>
<div class="t" style="left:554px;top:503.40000000000003px;width:73px;text-align:center;font-size:14px;font-weight:bold;">1</div>
<div class="t" style="left:630px;top:503.40000000000003px;width:230px;text-align:left;font-size:14px;font-weight:bold;">SOLUZIONE FISIOLOGICA 500 ml</div>
<div class="t" style="left:864px;top:503.40000000000003px;width:50px;text-align:center;font-size:14px;font-weight:bold;">EV</div>
<div class="t" style="left:1065.5px;top:503.40000000000003px;width:156px;text-align:left;font-size:14px;font-weight:bold;">1 fl se idratazione insuff</div>
<div style="position:absolute;left:1013px;top:500.90000000000003px"><svg width="22" height="22" viewBox="0 0 22 22"><circle cx="8.7" cy="7.9" r="6" fill="none" stroke="#45ace6" stroke-width="2.9"/><line x1="14" y1="14" x2="19.6" y2="20" stroke="#f0a020" stroke-width="3.2" stroke-linecap="round"/></svg></div>
<div style="position:absolute;left:9.6px;top:523.0px"><svg width="30" height="30" viewBox="0 0 30 30"><g transform="rotate(45 15 15)"><rect x="12.2" y="3.4" width="5.6" height="4" rx="2.6" fill="#8c9797"/><rect x="12" y="6.6" width="6" height="1.4" fill="#eef0f0"/><rect x="12" y="8" width="6" height="16" fill="#ec7c20"/><rect x="15.3" y="8" width="2.7" height="16" fill="#d65a06"/><path d="M12 24 L18 24 L15 28.6 Z" fill="#f4e8d6"/><path d="M13.9 26.3 L16.1 26.3 L15 28.7 Z" fill="#33405a"/></g></svg></div>
<div class="t" style="left:157.5px;top:529.2px;font-size:14px;font-weight:bold;">ALBE</div>
<div class="t" style="left:303px;top:529.2px;width:36px;text-align:center;font-size:14px;font-weight:bold;">P</div>
<div class="t" style="left:351.5px;top:529.2px;width:97px;text-align:left;font-size:14px;font-weight:bold;">12/09/19</div>
<div class="t" style="left:414.5px;top:529.2px;font-size:14px;font-weight:bold;">Gio</div>
<div class="t" style="left:451px;top:529.2px;width:51px;text-align:center;font-size:14px;font-weight:bold;">08:00</div>
<div class="t" style="left:554px;top:529.2px;width:73px;text-align:center;font-size:14px;font-weight:bold;">1</div>
<div class="t" style="left:630px;top:529.2px;width:230px;text-align:left;font-size:14px;font-weight:bold;">SERTRALINA cloridrato 50 mg CP</div>
<div class="t" style="left:864px;top:529.2px;width:50px;text-align:center;font-size:14px;font-weight:bold;">Orale</div>
<div style="position:absolute;left:1013px;top:526.7px"><svg width="22" height="22" viewBox="0 0 22 22"><circle cx="8.7" cy="7.9" r="6" fill="none" stroke="#45ace6" stroke-width="2.9"/><line x1="14" y1="14" x2="19.6" y2="20" stroke="#f0a020" stroke-width="3.2" stroke-linecap="round"/></svg></div>
<div style="position:absolute;left:9.6px;top:548.8px"><svg width="30" height="30" viewBox="0 0 30 30"><g transform="rotate(45 15 15)"><rect x="12.2" y="3.4" width="5.6" height="4" rx="2.6" fill="#8c9797"/><rect x="12" y="6.6" width="6" height="1.4" fill="#eef0f0"/><rect x="12" y="8" width="6" height="16" fill="#ec7c20"/><rect x="15.3" y="8" width="2.7" height="16" fill="#d65a06"/><path d="M12 24 L18 24 L15 28.6 Z" fill="#f4e8d6"/><path d="M13.9 26.3 L16.1 26.3 L15 28.7 Z" fill="#33405a"/></g></svg></div>
<div class="t" style="left:157.5px;top:555.0px;font-size:14px;font-weight:bold;">ALBE</div>
<div class="t" style="left:303px;top:555.0px;width:36px;text-align:center;font-size:14px;font-weight:bold;">P</div>
<div class="t" style="left:351.5px;top:555.0px;width:97px;text-align:left;font-size:14px;font-weight:bold;">12/09/19</div>
<div class="t" style="left:414.5px;top:555.0px;font-size:14px;font-weight:bold;">Gio</div>
<div class="t" style="left:451px;top:555.0px;width:51px;text-align:center;font-size:14px;font-weight:bold;">08:00</div>
<div class="t" style="left:554px;top:555.0px;width:73px;text-align:center;font-size:14px;font-weight:bold;">1</div>
<div class="t" style="left:630px;top:555.0px;width:230px;text-align:left;font-size:14px;font-weight:bold;">QUETIAPINA 50 mg CP</div>
<div class="t" style="left:864px;top:555.0px;width:50px;text-align:center;font-size:14px;font-weight:bold;">Orale</div>
<div style="position:absolute;left:1013px;top:552.5px"><svg width="22" height="22" viewBox="0 0 22 22"><circle cx="8.7" cy="7.9" r="6" fill="none" stroke="#45ace6" stroke-width="2.9"/><line x1="14" y1="14" x2="19.6" y2="20" stroke="#f0a020" stroke-width="3.2" stroke-linecap="round"/></svg></div>
<div style="position:absolute;left:9.6px;top:574.5999999999999px"><svg width="30" height="30" viewBox="0 0 30 30"><g transform="rotate(45 15 15)"><rect x="12.2" y="3.4" width="5.6" height="4" rx="2.6" fill="#8c9797"/><rect x="12" y="6.6" width="6" height="1.4" fill="#eef0f0"/><rect x="12" y="8" width="6" height="16" fill="#ec7c20"/><rect x="15.3" y="8" width="2.7" height="16" fill="#d65a06"/><path d="M12 24 L18 24 L15 28.6 Z" fill="#f4e8d6"/><path d="M13.9 26.3 L16.1 26.3 L15 28.7 Z" fill="#33405a"/></g></svg></div>
<div class="t" style="left:157.5px;top:580.8px;font-size:14px;font-weight:bold;">ALBE</div>
<div class="t" style="left:303px;top:580.8px;width:36px;text-align:center;font-size:14px;font-weight:bold;">P</div>
<div class="t" style="left:351.5px;top:580.8px;width:97px;text-align:left;font-size:14px;font-weight:bold;">12/09/19</div>
<div class="t" style="left:414.5px;top:580.8px;font-size:14px;font-weight:bold;">Gio</div>
<div class="t" style="left:451px;top:580.8px;width:51px;text-align:center;font-size:14px;font-weight:bold;">10:00</div>
<div class="t" style="left:554px;top:580.8px;width:73px;text-align:center;font-size:14px;font-weight:bold;">1</div>
<div class="t" style="left:630px;top:580.8px;width:230px;text-align:left;font-size:14px;font-weight:bold;">FORTIMEL CREME 125 G</div>
<div class="t" style="left:864px;top:580.8px;width:50px;text-align:center;font-size:14px;font-weight:bold;">Orale</div>
<div class="t" style="left:1065.5px;top:580.8px;width:156px;text-align:left;font-size:14px;font-weight:bold;">INTEGRATORE ALIMEN</div>
<div style="position:absolute;left:1013px;top:578.3px"><svg width="22" height="22" viewBox="0 0 22 22"><circle cx="8.7" cy="7.9" r="6" fill="none" stroke="#45ace6" stroke-width="2.9"/><line x1="14" y1="14" x2="19.6" y2="20" stroke="#f0a020" stroke-width="3.2" stroke-linecap="round"/></svg></div>
<div style="position:absolute;left:9.6px;top:600.4px"><svg width="30" height="30" viewBox="0 0 30 30"><g transform="rotate(45 15 15)"><rect x="12.2" y="3.4" width="5.6" height="4" rx="2.6" fill="#8c9797"/><rect x="12" y="6.6" width="6" height="1.4" fill="#eef0f0"/><rect x="12" y="8" width="6" height="16" fill="#ec7c20"/><rect x="15.3" y="8" width="2.7" height="16" fill="#d65a06"/><path d="M12 24 L18 24 L15 28.6 Z" fill="#f4e8d6"/><path d="M13.9 26.3 L16.1 26.3 L15 28.7 Z" fill="#33405a"/></g></svg></div>
<div class="t" style="left:157.5px;top:606.6px;font-size:14px;font-weight:bold;">ALBE</div>
<div class="t" style="left:303px;top:606.6px;width:36px;text-align:center;font-size:14px;font-weight:bold;">P</div>
<div class="t" style="left:351.5px;top:606.6px;width:97px;text-align:left;font-size:14px;font-weight:bold;">12/09/19</div>
<div class="t" style="left:414.5px;top:606.6px;font-size:14px;font-weight:bold;">Gio</div>
<div class="t" style="left:451px;top:606.6px;width:51px;text-align:center;font-size:14px;font-weight:bold;">15:00</div>
<div class="t" style="left:554px;top:606.6px;width:73px;text-align:center;font-size:14px;font-weight:bold;">1</div>
<div class="t" style="left:630px;top:606.6px;width:230px;text-align:left;font-size:14px;font-weight:bold;">FORTIMEL CREME 125 G</div>
<div class="t" style="left:864px;top:606.6px;width:50px;text-align:center;font-size:14px;font-weight:bold;">Orale</div>
<div class="t" style="left:1065.5px;top:606.6px;width:156px;text-align:left;font-size:14px;font-weight:bold;">INTEGRATORE ALIMEN</div>
<div style="position:absolute;left:1013px;top:604.1px"><svg width="22" height="22" viewBox="0 0 22 22"><circle cx="8.7" cy="7.9" r="6" fill="none" stroke="#45ace6" stroke-width="2.9"/><line x1="14" y1="14" x2="19.6" y2="20" stroke="#f0a020" stroke-width="3.2" stroke-linecap="round"/></svg></div>
<div style="position:absolute;left:9.6px;top:626.2px"><svg width="30" height="30" viewBox="0 0 30 30"><g transform="rotate(45 15 15)"><rect x="12.2" y="3.4" width="5.6" height="4" rx="2.6" fill="#8c9797"/><rect x="12" y="6.6" width="6" height="1.4" fill="#eef0f0"/><rect x="12" y="8" width="6" height="16" fill="#ec7c20"/><rect x="15.3" y="8" width="2.7" height="16" fill="#d65a06"/><path d="M12 24 L18 24 L15 28.6 Z" fill="#f4e8d6"/><path d="M13.9 26.3 L16.1 26.3 L15 28.7 Z" fill="#33405a"/></g></svg></div>
<div class="t" style="left:157.5px;top:632.4000000000001px;font-size:14px;font-weight:bold;">ALBE</div>
<div class="t" style="left:303px;top:632.4000000000001px;width:36px;text-align:center;font-size:14px;font-weight:bold;">P</div>
<div class="t" style="left:351.5px;top:632.4000000000001px;width:97px;text-align:left;font-size:14px;font-weight:bold;">12/09/19</div>
<div class="t" style="left:414.5px;top:632.4000000000001px;font-size:14px;font-weight:bold;">Gio</div>
<div class="t" style="left:451px;top:632.4000000000001px;width:51px;text-align:center;font-size:14px;font-weight:bold;">20:00</div>
<div class="t" style="left:554px;top:632.4000000000001px;width:73px;text-align:center;font-size:14px;font-weight:bold;">1</div>
<div class="t" style="left:630px;top:632.4000000000001px;width:230px;text-align:left;font-size:14px;font-weight:bold;">QUETIAPINA 100 mg CP</div>
<div class="t" style="left:864px;top:632.4000000000001px;width:50px;text-align:center;font-size:14px;font-weight:bold;">Orale</div>
<div style="position:absolute;left:1013px;top:629.9000000000001px"><svg width="22" height="22" viewBox="0 0 22 22"><circle cx="8.7" cy="7.9" r="6" fill="none" stroke="#45ace6" stroke-width="2.9"/><line x1="14" y1="14" x2="19.6" y2="20" stroke="#f0a020" stroke-width="3.2" stroke-linecap="round"/></svg></div>
<div style="position:absolute;left:13px;top:655.7px"><svg width="24" height="24" viewBox="0 0 24 24"><defs><linearGradient id="pg" x1="0" y1="0" x2="0" y2="1"><stop offset="0" stop-color="#ffe070"/><stop offset="0.45" stop-color="#ffcc10"/><stop offset="1" stop-color="#ffb000"/></linearGradient></defs><path d="M8 1h7.5v7h7v8h-7v7H8v-7H1V8h7z" fill="url(#pg)"/></svg></div>
<div class="t" style="left:157.5px;top:658.2px;font-size:14px;font-weight:bold;">ALBE</div>
<div class="t" style="left:303px;top:658.2px;width:36px;text-align:center;font-size:14px;font-weight:bold;">P</div>
<div class="t" style="left:351.5px;top:658.2px;width:97px;text-align:left;font-size:14px;font-weight:bold;">12/09/19</div>
<div class="t" style="left:414.5px;top:658.2px;font-size:14px;font-weight:bold;">Gio</div>
<div class="t" style="left:504px;top:658.2px;width:48px;text-align:left;font-size:14px;font-weight:bold;">Al bisogno</div>
<div class="t" style="left:630px;top:658.2px;width:230px;text-align:left;font-size:14px;font-weight:bold;">SOLUZIONE GLUCOSATA 5% 500 ml</div>
<div class="t" style="left:864px;top:658.2px;width:50px;text-align:center;font-size:14px;font-weight:bold;">EV</div>
<div style="position:absolute;left:1013px;top:655.7px"><svg width="22" height="22" viewBox="0 0 22 22"><circle cx="8.7" cy="7.9" r="6" fill="none" stroke="#45ace6" stroke-width="2.9"/><line x1="14" y1="14" x2="19.6" y2="20" stroke="#f0a020" stroke-width="3.2" stroke-linecap="round"/></svg></div>
<div style="position:absolute;left:1px;top:136.7px;width:1396px;height:2px;background:#6e6e6e"></div>
<div style="position:absolute;left:1px;top:163px;width:1396px;height:2px;background:#9c9c9c"></div>
<div style="position:absolute;left:1px;top:189px;width:1396px;height:1px;background:#8f8f8f"></div>
<div style="position:absolute;left:1px;top:215px;width:1396px;height:1px;background:#8f8f8f"></div>
<div style="position:absolute;left:1px;top:241px;width:1396px;height:1px;background:#8f8f8f"></div>
<div style="position:absolute;left:1px;top:267px;width:1396px;height:1px;background:#8f8f8f"></div>
<div style="position:absolute;left:1px;top:292px;width:1396px;height:1px;background:#8f8f8f"></div>
<div style="position:absolute;left:1px;top:318px;width:1396px;height:1px;background:#8f8f8f"></div>
<div style="position:absolute;left:1px;top:344px;width:1396px;height:1px;background:#8f8f8f"></div>
<div style="position:absolute;left:1px;top:370px;width:1396px;height:1px;background:#8f8f8f"></div>
<div style="position:absolute;left:1px;top:396px;width:1396px;height:1px;background:#8f8f8f"></div>
<div style="position:absolute;left:1px;top:422px;width:1396px;height:1px;background:#8f8f8f"></div>
<div style="position:absolute;left:1px;top:447px;width:1396px;height:1px;background:#8f8f8f"></div>
<div style="position:absolute;left:1px;top:473px;width:1396px;height:1px;background:#8f8f8f"></div>
<div style="position:absolute;left:1px;top:499px;width:1396px;height:1px;background:#8f8f8f"></div>
<div style="position:absolute;left:1px;top:525px;width:1396px;height:1px;background:#8f8f8f"></div>
<div style="position:absolute;left:1px;top:550px;width:1396px;height:1px;background:#8f8f8f"></div>
<div style="position:absolute;left:1px;top:576px;width:1396px;height:1px;background:#8f8f8f"></div>
<div style="position:absolute;left:1px;top:602px;width:1396px;height:1px;background:#8f8f8f"></div>
<div style="position:absolute;left:1px;top:628px;width:1396px;height:1px;background:#8f8f8f"></div>
<div style="position:absolute;left:1px;top:654px;width:1396px;height:1px;background:#8f8f8f"></div>
<div style="position:absolute;left:52px;top:137.7px;width:1px;height:534.3px;background:#9a9a9a"></div>
<div style="position:absolute;left:103px;top:137.7px;width:1px;height:534.3px;background:#9a9a9a"></div>
<div style="position:absolute;left:155px;top:137.7px;width:1px;height:534.3px;background:#9a9a9a"></div>
<div style="position:absolute;left:302px;top:137.7px;width:1px;height:534.3px;background:#9a9a9a"></div>
<div style="position:absolute;left:339px;top:137.7px;width:1px;height:534.3px;background:#9a9a9a"></div>
<div style="position:absolute;left:450px;top:137.7px;width:1px;height:534.3px;background:#9a9a9a"></div>
<div style="position:absolute;left:502px;top:137.7px;width:1px;height:534.3px;background:#9a9a9a"></div>
<div style="position:absolute;left:553px;top:137.7px;width:1px;height:534.3px;background:#9a9a9a"></div>
<div style="position:absolute;left:627px;top:137.7px;width:1px;height:534.3px;background:#9a9a9a"></div>
<div style="position:absolute;left:863px;top:137.7px;width:1px;height:534.3px;background:#9a9a9a"></div>
<div style="position:absolute;left:914px;top:137.7px;width:1px;height:534.3px;background:#9a9a9a"></div>
<div style="position:absolute;left:988px;top:137.7px;width:1px;height:534.3px;background:#9a9a9a"></div>
<div style="position:absolute;left:1062px;top:137.7px;width:1px;height:534.3px;background:#9a9a9a"></div>
<div style="position:absolute;left:1224px;top:137.7px;width:1px;height:534.3px;background:#9a9a9a"></div>
<div style="position:absolute;left:0px;top:72px;width:1.3px;height:600px;background:#7a7a7a"></div>
<div style="position:absolute;left:192px;top:167px;width:109px;height:505px;background:#fff"></div>
<div style="position:absolute;left:52.5px;top:499.90000000000003px;width:103px;height:25.3px;background:#808080"></div>
<div style="position:absolute;left:52.5px;top:654.7px;width:103px;height:25.3px;background:#808080"></div>
<div style="position:absolute;left:0px;top:672.5px;width:1397px;height:5px;background:#f0f0f0"></div>
<div style="position:absolute;left:12px;top:673px;width:771px;height:4px;background:#cdcdcd"></div>
</body></html>
